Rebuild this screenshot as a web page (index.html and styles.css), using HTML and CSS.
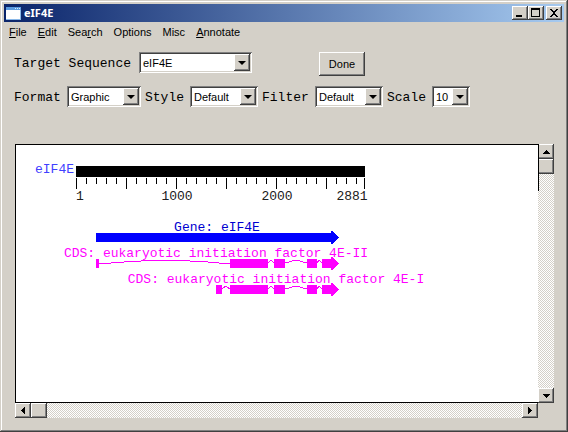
FILE: index.html
```html
<!DOCTYPE html>
<html lang="en">
<head>
<meta charset="utf-8">
<title>eIF4E</title>
<link rel="stylesheet" href="styles.css">
</head>
<body>
<div class="window">
  <header class="titlebar">
    <svg class="app-icon" width="15" height="13" viewBox="0 0 15 13" shape-rendering="crispEdges" aria-hidden="true">
      <path fill="#fff" d="M0 0h15v13H0z"/>
      <path fill="#5b9be0" d="M0 0h15v3H0z"/>
      <path fill="#d8ecff" d="M9 1h1v1H9zM11 1h1v1h-1zM13 1h1v1h-1z"/>
      <path fill="#8ab8e8" d="M0 12h15v1H0zM14 3h1v9h-1z"/>
    </svg>
    <h1>eIF4E</h1>
    <button class="bevel caption" aria-label="Minimize"><svg width="12" height="10" viewBox="0 0 12 10" shape-rendering="crispEdges"><path d="M2 7h6v2H2z"/></svg></button>
    <button class="bevel caption" aria-label="Maximize"><svg width="12" height="10" viewBox="0 0 12 10" shape-rendering="crispEdges"><path fill-rule="evenodd" d="M1 0h9v9H1zM2 2v6h7V2z"/></svg></button>
    <button class="bevel caption close" aria-label="Close"><svg width="12" height="10" viewBox="0 0 12 10" shape-rendering="crispEdges"><path d="M2 1h2v1h1v1h2V2h1V1h2v1H9v1H8v1H7v2h1v1h1v1h1v1H8V8H7V7H5v1H4v1H2V8h1V7h1V6h1V4H4V3H3V2H2z"/></svg></button>
  </header>

  <nav class="menu">
    <a href="#"><u>F</u>ile</a>
    <a href="#"><u>E</u>dit</a>
    <a href="#">Sea<u>r</u>ch</a>
    <a href="#">Options</a>
    <a href="#">Misc</a>
    <a href="#"><u>A</u>nnotate</a>
  </nav>

  <form class="controls">
    <div class="row target">
      <label for="target">Target Sequence</label>
      <span class="combo"><select id="target"><option>eIF4E</option></select><span class="bevel drop"></span></span>
      <button type="button" class="bevel done">Done</button>
    </div>
    <div class="row options">
      <label for="format">Format</label>
      <span class="combo"><select id="format"><option>Graphic</option></select><span class="bevel drop"></span></span>
      <label for="style">Style</label>
      <span class="combo"><select id="style"><option>Default</option></select><span class="bevel drop"></span></span>
      <label for="filter">Filter</label>
      <span class="combo"><select id="filter"><option>Default</option></select><span class="bevel drop"></span></span>
      <label for="scale">Scale</label>
      <span class="combo"><select id="scale"><option>10</option></select><span class="bevel drop"></span></span>
    </div>
  </form>

  <main class="viewer">
    <div class="canvas">
      <svg class="map" width="500" height="200" viewBox="0 0 500 200" shape-rendering="crispEdges" role="img" aria-label="Sequence map">
        <defs>
          <pattern id="minor" x="60" y="33" width="10" height="6" patternUnits="userSpaceOnUse"><rect width="1" height="6"/></pattern>
          <pattern id="major" x="60" y="33" width="50" height="11" patternUnits="userSpaceOnUse"><rect width="1" height="11"/></pattern>
        </defs>
        <text class="name" x="58" y="28" text-anchor="end">eIF4E</text>
        <rect x="60" y="21" width="289" height="11"/>
        <rect x="60" y="33" width="288" height="6" fill="url(#minor)"/>
        <rect x="60" y="33" width="288" height="11" fill="url(#major)"/>
        <rect x="348" y="33" width="1" height="11"/>
        <g class="ticks" text-anchor="middle">
          <text x="64" y="55">1</text>
          <text x="161" y="55">1000</text>
          <text x="261" y="55">2000</text>
          <text x="336" y="55">2881</text>
        </g>
        <g class="gene">
          <text x="201" y="86" text-anchor="middle">Gene: eIF4E</text>
          <path d="M80 88h235v-2h1l7 6v1l-7 6h-1v-2H80z"/>
        </g>
        <g class="cds">
          <text x="200" y="112" text-anchor="middle">CDS: eukaryotic initiation factor 4E-II</text>
          <path class="intron" d="M83 119L108 117L142 115H156L192 117L214 119M252 118L255 115L258 118M269 118L280 115L291 118M301 118L303 115L306 118"/>
          <path d="M80 114h3v9h-3zM214 114h38v9h-38zM258 114h11v9h-11zM291 114h10v9h-10zM306 114h9v-2h1l7 6v1l-7 6h-1v-2h-9z"/>
        </g>
        <g class="cds">
          <text x="260" y="138" text-anchor="middle">CDS: eukaryotic initiation factor 4E-I</text>
          <path class="intron" d="M206 144L210 141L214 144M252 144L255 141L258 144M269 144L280 141L291 144M301 144L303 141L306 144"/>
          <path d="M200 140h6v9h-6zM214 140h38v9h-38zM258 140h11v9h-11zM291 140h10v9h-10zM306 140h9v-2h1l7 6v1l-7 6h-1v-2h-9z"/>
        </g>
      </svg>
    </div>
    <div class="scroll vertical">
      <button class="bevel" aria-label="Scroll up"><svg width="7" height="4" viewBox="0 0 7 4" shape-rendering="crispEdges"><path d="M3 0h1v1h1v1h1v1h1v1H0V3h1V2h1V1h1z"/></svg></button>
      <span class="bevel thumb"></span>
      <button class="bevel end" aria-label="Scroll down"><svg width="7" height="4" viewBox="0 0 7 4" shape-rendering="crispEdges"><path d="M0 0h7v1H6v1H5v1H4v1H3V3H2V2H1V1H0z"/></svg></button>
    </div>
    <div class="scroll horizontal">
      <button class="bevel" aria-label="Scroll left"><svg width="4" height="7" viewBox="0 0 4 7" shape-rendering="crispEdges"><path d="M4 0v7H3V6H2V5H1V4H0V3h1V2h1V1h1V0z"/></svg></button>
      <span class="bevel thumb"></span>
      <button class="bevel end" aria-label="Scroll right"><svg width="4" height="7" viewBox="0 0 4 7" shape-rendering="crispEdges"><path d="M0 0v7h1V6h1V5h1V4h1V3H3V2H2V1H1V0z"/></svg></button>
    </div>
  </main>
</div>
</body>
</html>
```
FILE: styles.css
```css
:root {
  --face: #d4d0c8;
  --shadow: #808080;
  --dark: #404040;
  --ui: "Liberation Sans", Arial, sans-serif;
  --mono: "Liberation Mono", "Courier New", monospace;
}

* {
  box-sizing: border-box;
}

body {
  margin: 0;
  font: 11px/16px var(--ui);
  color: #000;
}

.window {
  display: flex;
  flex-direction: column;
  min-height: 100vh;
  padding: 4px;
  background: var(--face);
  box-shadow: inset -1px -1px var(--dark), inset 1px 1px var(--face),
    inset -2px -2px var(--shadow), inset 2px 2px #fff;
}

.bevel {
  display: flex;
  align-items: center;
  justify-content: center;
  margin: 0;
  padding: 0;
  border: 0;
  background: var(--face);
  box-shadow: inset -1px -1px var(--dark), inset 1px 1px #fff,
    inset -2px -2px var(--shadow);
  font: inherit;
  color: inherit;
}

/* Title bar */
.titlebar {
  display: flex;
  align-items: center;
  height: 18px;
  padding: 0 2px;
  background: linear-gradient(to right, #0a246a, #a6caf0);
}

.titlebar h1 {
  flex: 1;
  margin: 0 0 0 3px;
  font: bold 11px/18px "Noto Sans", sans-serif;
  color: #fff;
}

.caption {
  width: 16px;
  height: 14px;
}

.close {
  margin-left: 2px;
}

/* Menu */
.menu {
  display: flex;
  gap: 11px;
  height: 20px;
  padding: 2px 5px;
}

.menu a {
  color: inherit;
  text-decoration: none;
}

/* Controls */
.controls {
  padding: 10px 10px 0;
}

.row {
  display: grid;
  align-items: start;
  height: 34px;
}

.target {
  grid-template-columns: 125px 113px 46px;
}

.options {
  grid-template-columns: 53px 74px 49px 68px 57px 68px 49px 38px;
}

.row label {
  font: 13px/24px var(--mono);
}

.combo + label {
  padding-left: 4px;
}

.done {
  height: 24px;
  margin-left: 67px;
  width: 46px;
}

.combo {
  position: relative;
  height: 21px;
  padding: 2px;
  background: #fff;
  box-shadow: inset 1px 1px var(--shadow), inset -1px -1px #fff,
    inset 2px 2px var(--dark), inset -2px -2px var(--face);
}

.combo select {
  display: block;
  width: 100%;
  height: 18px;
  padding: 1px 0 0 2px;
  border: 0;
  appearance: none;
  background: none;
  font: 11px/17px var(--ui);
  color: #000;
}

.drop {
  position: absolute;
  top: 2px;
  right: 2px;
  width: 16px;
  height: 17px;
  pointer-events: none;
}

.drop::after {
  content: "";
  border: 4px solid transparent;
  border-top-color: #000;
  border-bottom: 0;
}

/* Sequence viewer */
.viewer {
  flex: 1;
  display: grid;
  grid-template: 1fr 15px / 1fr 16px;
  margin: 24px 10px 10px 11px;
}

.canvas {
  overflow: hidden;
  border: 1px solid #000;
  border-right: 0;
  background: #fff;
}

.map {
  display: block;
}

.map text {
  font: 13px var(--mono);
}

.name {
  fill: #4040ff;
}

.ticks {
  fill: #202020;
}

.gene {
  fill: #00f;
}

.gene text {
  fill: #0000d0;
}

.cds {
  fill: #f0f;
}

.intron {
  fill: none;
  stroke: #f0f;
}

.scroll {
  display: flex;
  background: repeating-conic-gradient(#fff 0 25%, var(--face) 0 50%) 0 0 / 2px 2px;
}

.scroll .bevel {
  flex: none;
  width: 16px;
  height: 15px;
}

.vertical {
  position: relative;
  flex-direction: column;
}

/* Canvas edge that runs beside the top of the scroll bar */
.vertical::before {
  content: "";
  position: absolute;
  left: 0;
  top: 0;
  width: 1px;
  height: 47px;
  background: #000;
}

.vertical .end {
  margin-top: auto;
}

.horizontal .end {
  margin-left: auto;
}
```
